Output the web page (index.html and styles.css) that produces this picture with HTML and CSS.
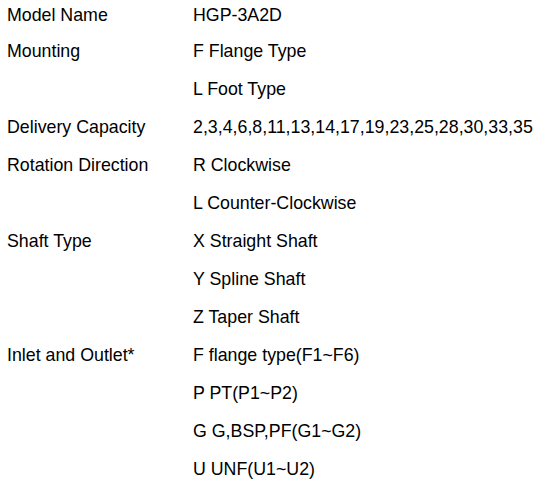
FILE: index.html
```html
<!DOCTYPE html>
<html>
<head>
<meta charset="utf-8">
<link rel="stylesheet" href="styles.css">
</head>
<body>
<div class="specs">
  <div class="row first"><div class="label">Model Name</div><div class="values"><div class="v">HGP-3A2D</div></div></div>
  <div class="row"><div class="label">Mounting</div><div class="values"><div class="v">F Flange Type</div><div class="v">L Foot Type</div></div></div>
  <div class="row"><div class="label">Delivery Capacity</div><div class="values"><div class="v">2,3,4,6,8,11,13,14,17,19,23,25,28,30,33,35</div></div></div>
  <div class="row"><div class="label">Rotation Direction</div><div class="values"><div class="v">R Clockwise</div><div class="v">L Counter-Clockwise</div></div></div>
  <div class="row"><div class="label">Shaft Type</div><div class="values"><div class="v">X Straight Shaft</div><div class="v">Y Spline Shaft</div><div class="v">Z Taper Shaft</div></div></div>
  <div class="row"><div class="label">Inlet and Outlet*</div><div class="values"><div class="v">F flange type(F1~F6)</div><div class="v">P PT(P1~P2)</div><div class="v">G G,BSP,PF(G1~G2)</div><div class="v">U UNF(U1~U2)</div></div></div>
</div>
</body>
</html>
```
FILE: styles.css
```css
html, body {
  margin: 0;
  padding: 0;
  background: #fff;
}
body {
  font-family: "Liberation Sans", Arial, sans-serif;
  font-size: 17.8px;
  color: #000;
}
.specs {
  padding-left: 7px;
}
.row {
  display: grid;
  grid-template-columns: 186px 1fr;
}
.label, .v {
  line-height: 38px;
  height: 38px;
  white-space: nowrap;
}
.row.first {
  padding-bottom: 2px;
}
.row.first .label, .row.first .v {
  line-height: 30px;
  height: 30px;
}
```
